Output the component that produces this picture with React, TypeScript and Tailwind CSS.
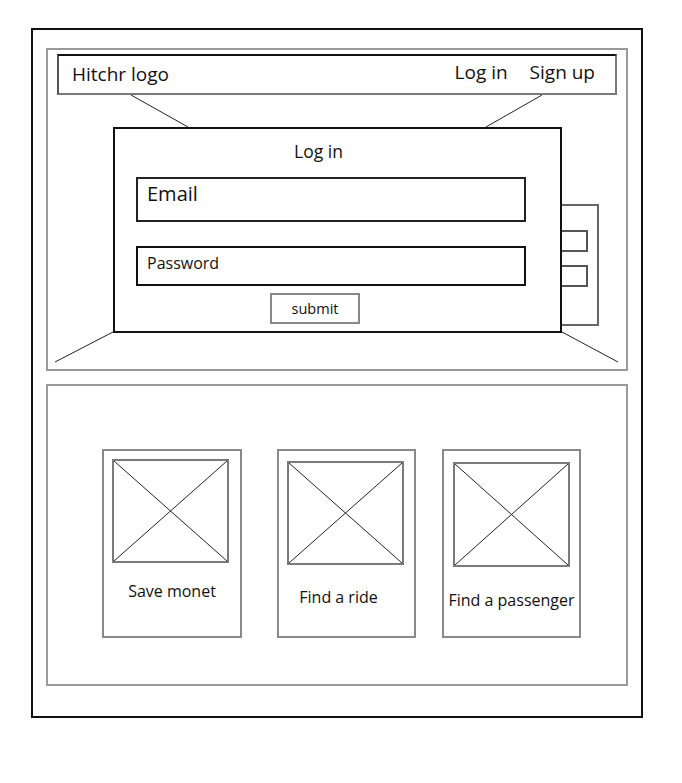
import React from "react";

const font = { fontFamily: '"Open Sans", "Noto Sans", sans-serif' };

function Placeholder({ className }: { className: string }) {
  return (
    <div className={`relative border-2 border-[#7a7a7a] ${className}`}>
      <svg
        className="absolute inset-0 h-full w-full"
        viewBox="0 0 100 100"
        preserveAspectRatio="none"
      >
        <line x1="0" y1="0" x2="100" y2="100" stroke="#222" strokeWidth="1" vectorEffect="non-scaling-stroke" />
        <line x1="100" y1="0" x2="0" y2="100" stroke="#222" strokeWidth="1" vectorEffect="non-scaling-stroke" />
      </svg>
    </div>
  );
}

export default function App() {
  return (
    <div className="h-[783px] w-[682px] bg-white pl-[31px] pt-[28px] text-[#111]" style={font}>
      <div className="h-[690px] w-[612px] border-2 border-[#111] pl-[13px] pt-[18px]">
        {/* top section */}
        <div className="relative h-[323px] w-[582px] border-2 border-[#9a9a9a] pl-[9px] pt-[4px]">
          <svg
            className="pointer-events-none absolute inset-0 h-full w-full"
            viewBox="0 0 578 319"
          >
            <line x1="83" y1="45" x2="140" y2="77" stroke="#222" strokeWidth="1" />
            <line x1="494" y1="45" x2="438" y2="77" stroke="#222" strokeWidth="1" />
            <line x1="65" y1="282" x2="7" y2="312" stroke="#222" strokeWidth="1" />
            <line x1="514" y1="282" x2="570" y2="312" stroke="#222" strokeWidth="1" />
          </svg>

          {/* header */}
          <div className="flex h-[41px] w-[560px] items-center justify-between border-2 border-[#7a7a7a] border-l-[#555] border-t-[#111] pl-[13px] pr-[20px] text-[19px]">
            <span>Hitchr logo</span>
            <div className="mb-[5px] flex gap-[22px]">
              <span>Log in</span>
              <span>Sign up</span>
            </div>
          </div>

          {/* modal + side panel */}
          <div className="ml-[56px] mt-[32px] flex items-start">
            <div className="relative z-10 h-[206px] w-[449px] border-2 border-[#111] bg-white">
              <div className="ml-[179px] mt-[12px] h-[20px] text-[17.5px] leading-[20px]">Log in</div>
              <div className="ml-[21px] mt-[16px] h-[45px] w-[390px] border-2 border-[#222] pl-[9px] pt-[3px] text-[20px] leading-[24px]">
                Email
              </div>
              <div className="ml-[21px] mt-[24px] h-[40px] w-[390px] border-2 border-[#111] pl-[9px] pt-[5px] text-[16px] leading-[20px]">
                Password
              </div>
              <div className="ml-[155px] mt-[7px] flex h-[31px] w-[90px] items-center justify-center border-2 border-[#888] text-[14.5px] leading-[18px]">
                submit
              </div>
            </div>
            <div className="mt-[77px] h-[122px] w-[37px] border-y-2 border-r-2 border-[#666]">
              <div className="mt-[24px] h-[22px] w-[26px] border-y-2 border-r-2 border-[#555]" />
              <div className="mt-[13px] h-[22px] w-[26px] border-y-2 border-r-2 border-[#555]" />
            </div>
          </div>
        </div>

        {/* bottom section */}
        <div className="mt-[13px] h-[302px] w-[582px] border-2 border-[#9a9a9a] pl-[54px] pt-[63px]">
          <div className="flex items-start">
            <div className="h-[189px] w-[140px] border-2 border-[#8a8a8a]">
              <Placeholder className="ml-[8px] mt-[8px] h-[104px] w-[117px]" />
              <div className="mt-[18px] text-center text-[16px] leading-[20px]">Save monet</div>
            </div>
            <div className="ml-[35px] h-[189px] w-[139px] border-2 border-[#8a8a8a]">
              <Placeholder className="ml-[8px] mt-[10px] h-[104px] w-[117px]" />
              <div className="mt-[22px] pr-[16px] text-center text-[16px] leading-[20px]">Find a ride</div>
            </div>
            <div className="ml-[26px] h-[189px] w-[139px] border-2 border-[#8a8a8a]">
              <Placeholder className="ml-[9px] mt-[11px] h-[105px] w-[117px]" />
              <div className="mt-[23px] text-center text-[16px] leading-[20px]">Find a passenger</div>
            </div>
          </div>
        </div>
      </div>
    </div>
  );
}
